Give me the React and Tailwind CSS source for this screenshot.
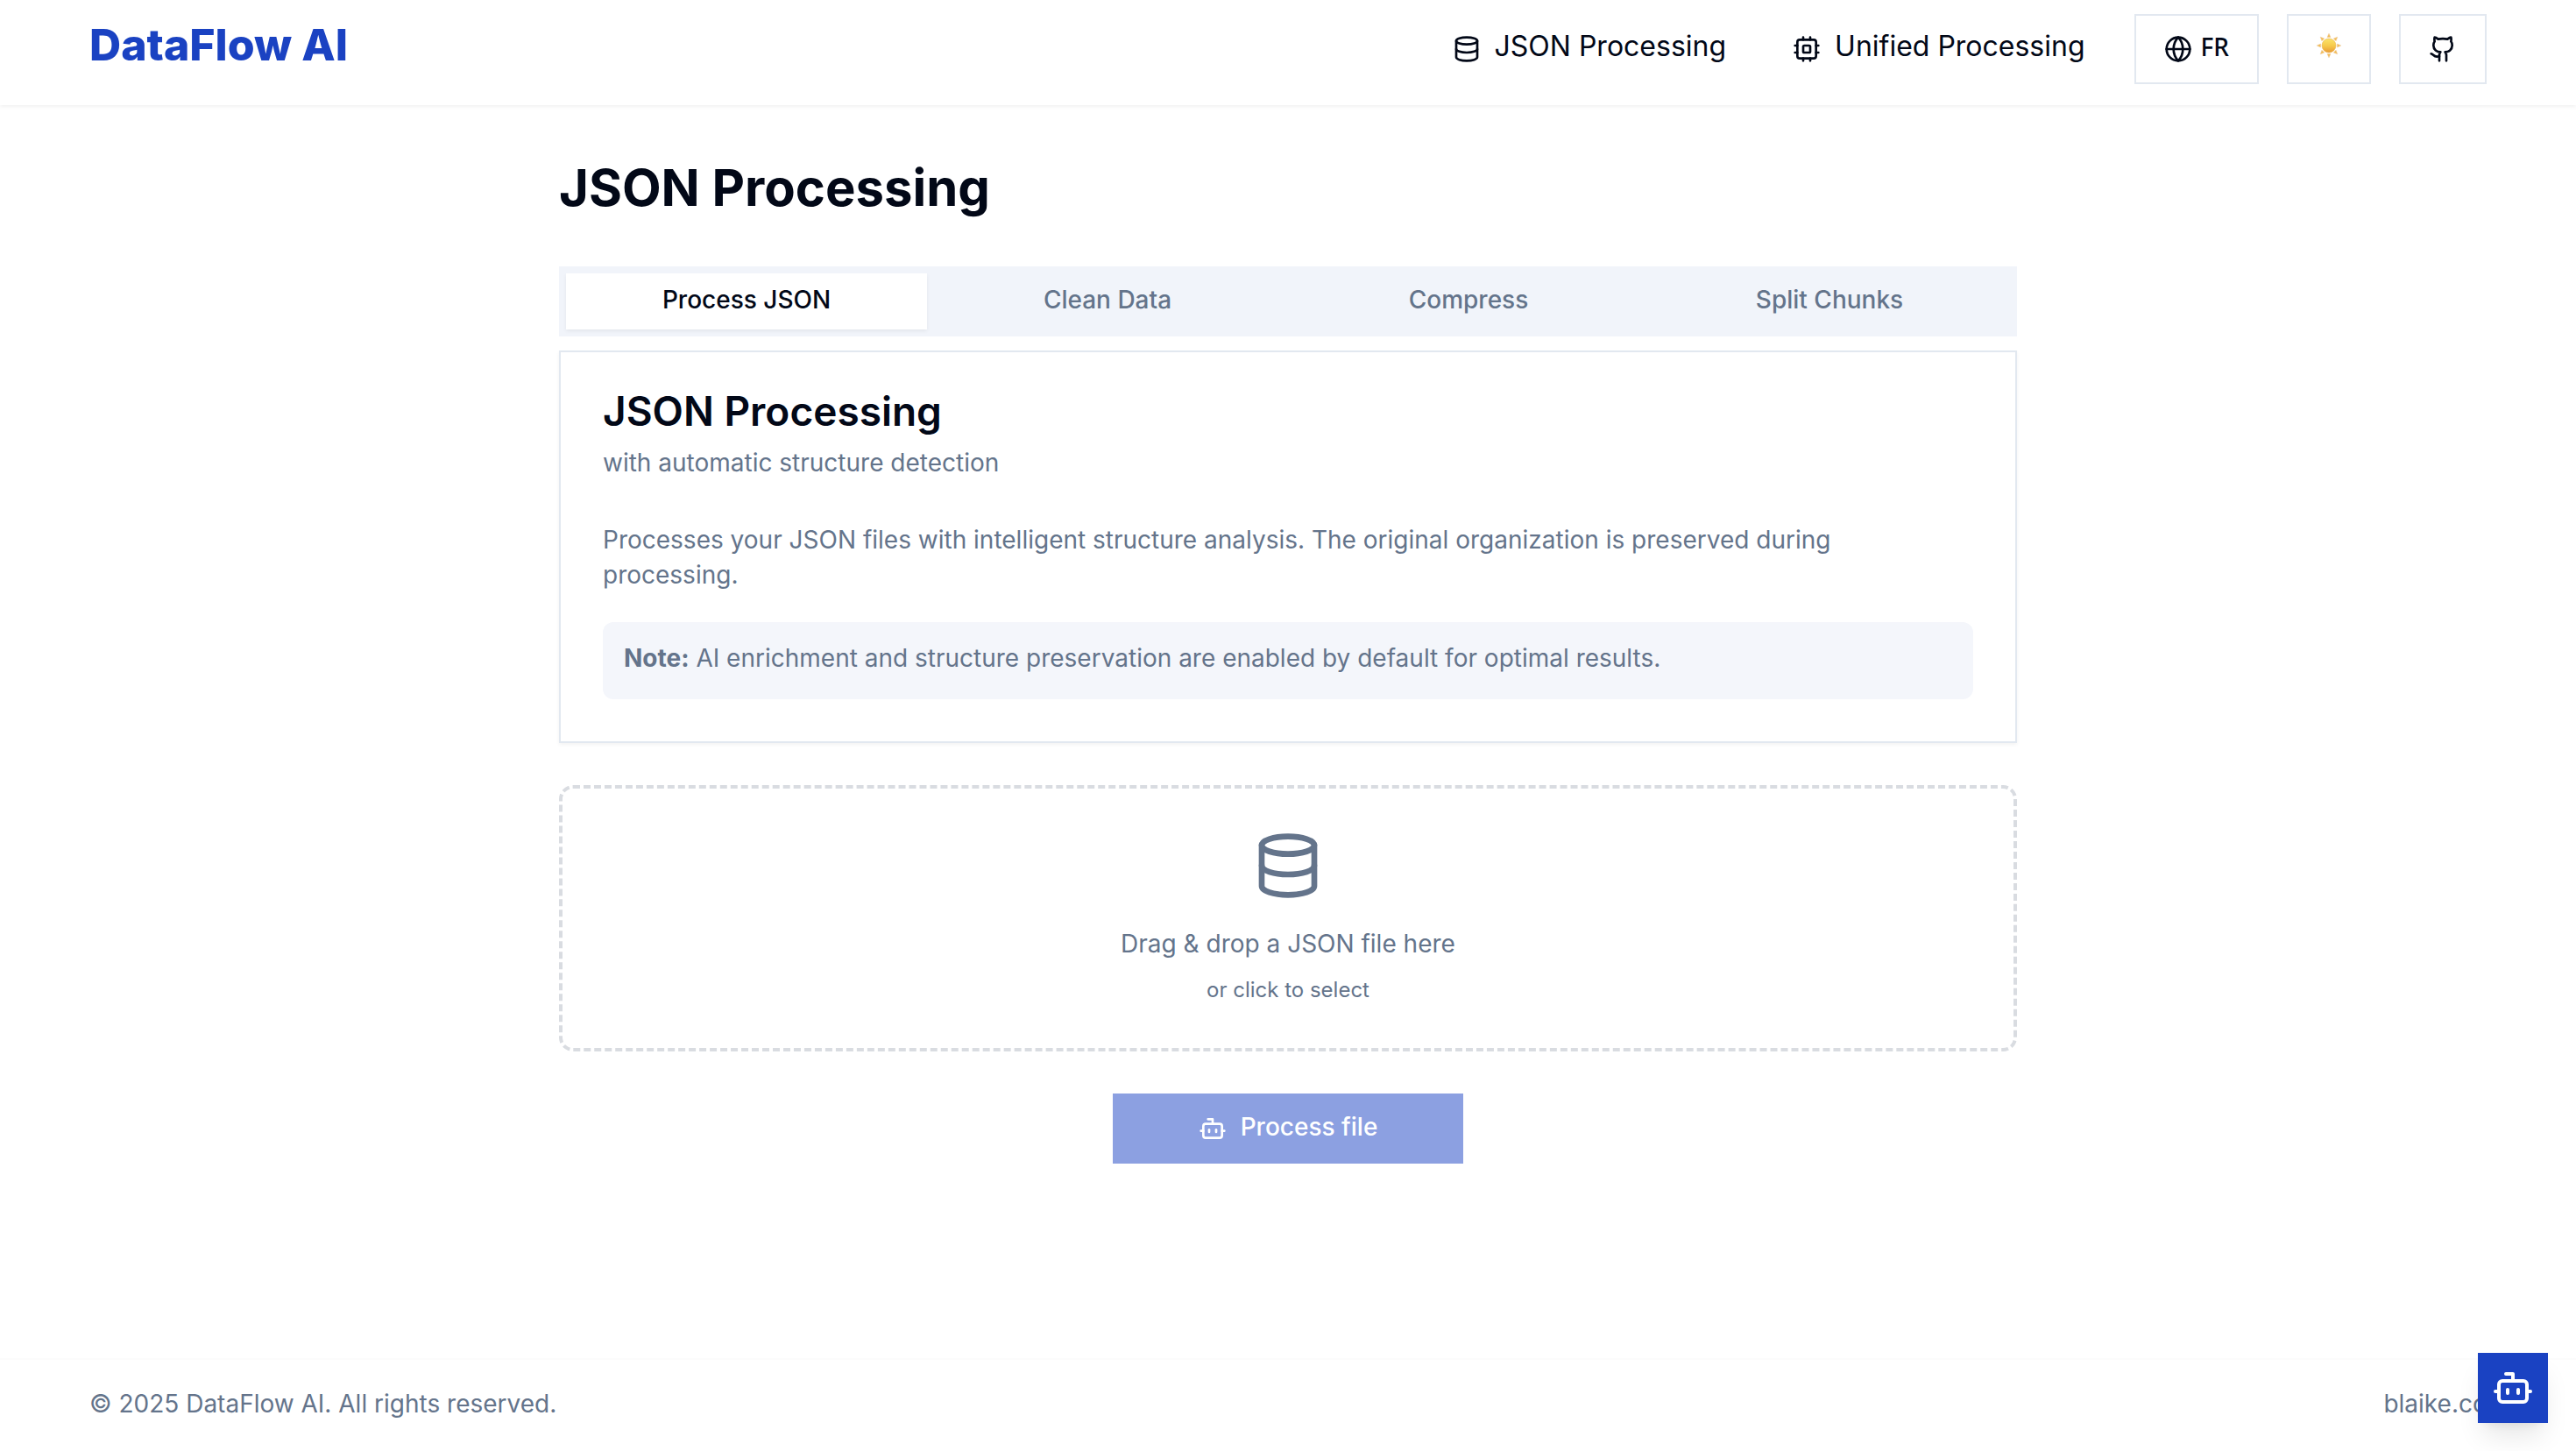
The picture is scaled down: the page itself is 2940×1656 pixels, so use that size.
import React from "react";
import { Bot, Database, Github, Globe } from "lucide-react";

function Chip({ className }) {
  return (
    <svg
      viewBox="0 0 24 24"
      fill="none"
      stroke="currentColor"
      strokeWidth="2"
      strokeLinecap="round"
      strokeLinejoin="round"
      className={className}
      aria-hidden="true"
    >
      <rect x="4" y="4" width="16" height="16" rx="2" />
      <rect x="9" y="9" width="6" height="6" rx="1" />
      <path d="M15 2v2M15 20v2M2 15h2M2 9h2M20 15h2M20 9h2M9 2v2M9 20v2" />
    </svg>
  );
}

const RAYS = [0, 45, 90, 135, 180, 225, 270, 315];

function Sun({ className }) {
  return (
    <svg viewBox="0 0 28 28" className={className} aria-hidden="true">
      <defs>
        <linearGradient id="sun-disc" x1="0" y1="0" x2="0" y2="1">
          <stop offset="0" stopColor="#fbe36a" />
          <stop offset="0.5" stopColor="#f6cb4c" />
          <stop offset="1" stopColor="#e99a35" />
        </linearGradient>
      </defs>
      {RAYS.map((a) => (
        <path
          key={a}
          d="M14 0.2L16 4.6H12Z"
          transform={`rotate(${a} 14 14)`}
          fill="#f2bd55"
          stroke="#edc9a0"
          strokeWidth="0.5"
        />
      ))}
      <circle cx="14" cy="14" r="8" fill="url(#sun-disc)" stroke="#eab04a" strokeWidth="0.5" />
    </svg>
  );
}

const NAV = [
  { label: "JSON Processing", Icon: Database },
  { label: "Unified Processing", Icon: Chip },
];

const TABS = ["Process JSON", "Clean Data", "Compress", "Split Chunks"];

function Header() {
  return (
    <header className="bg-white shadow-[0_2px_4px_rgba(0,0,0,0.06)]">
      <div className="mx-auto flex w-full max-w-[2800px] items-center justify-between px-8 pt-4 pb-6">
        <a href="#" className="pb-2.5 text-[50px] leading-[60px] font-extrabold text-[#1a42c2]">
          DataFlow AI
        </a>
        <div className="flex items-center gap-14">
          <nav className="flex items-center gap-19">
            {NAV.map(({ label, Icon }) => (
              <a key={label} href="#" className="flex items-center gap-4">
                <Icon className="size-8" />
                <span className="pb-1.5 text-[32px] leading-10">{label}</span>
              </a>
            ))}
          </nav>
          <div className="flex items-center gap-8">
            <button className="flex h-20 items-center gap-2.5 border-2 border-[#e2e8f0] px-8">
              <Globe className="size-8" />
              <span className="pb-1.5 font-['Noto_Sans',sans-serif] text-[28px] leading-10 font-medium">FR</span>
            </button>
            <button aria-label="Toggle theme" className="flex h-20 items-center border-2 border-[#e2e8f0] px-8 pb-2">
              <Sun className="size-7" />
            </button>
            <a
              href="#"
              aria-label="GitHub"
              className="flex h-20 items-center border-2 border-[#e2e8f0] px-8"
            >
              <Github className="size-8" />
            </a>
          </div>
        </div>
      </div>
    </header>
  );
}

export default function App() {
  return (
    <div className="flex min-h-screen flex-col bg-white font-[Inter,sans-serif] text-[28px] leading-10 text-[#020817]">
      <Header />
      <main className="mx-auto w-full max-w-[1792px] flex-1 px-16 pt-16">
        <h1 className="mb-15 text-[58px] leading-[60px] font-bold">JSON Processing</h1>

        <div role="tablist" className="grid h-20 grid-cols-4 bg-[#f1f4fa] p-2 font-medium text-[#64748b]">
          {TABS.map((tab, i) => (
            <button
              key={tab}
              role="tab"
              aria-selected={i === 0}
              className="pb-1 aria-selected:bg-white aria-selected:text-[#020817] aria-selected:shadow-[0_2px_4px_rgba(0,0,0,0.06)]"
            >
              {tab}
            </button>
          ))}
        </div>

        <section className="mt-4 border-2 border-[#e2e8f0] bg-white p-12 text-[#64748b] shadow-[0_2px_4px_rgba(0,0,0,0.05)]">
          <h2 className="text-[46px] leading-[38px] font-semibold text-[#020817]">JSON Processing</h2>
          <p className="mt-5">with automatic structure detection</p>
          <p className="mt-12 pr-8">
            Processes your JSON files with intelligent structure analysis. The original organization is preserved
            during processing.
          </p>
          <p className="mt-[34px] rounded-xl bg-[#f4f6fb] px-6 pt-[21px] pb-[27px]">
            <strong className="font-bold">Note:</strong> AI enrichment and structure preservation are enabled by
            default for optimal results.
          </p>
        </section>

        <label className="mt-12 flex cursor-pointer flex-col items-center rounded-2xl border-4 border-dashed border-[#d9dce1] pt-12 pb-[50px] text-[#64748b]">
          <Database className="size-20" />
          <span className="mt-[29px]">Drag &amp; drop a JSON file here</span>
          <span className="mt-[17px] text-2xl leading-8">or click to select</span>
          <input type="file" accept="application/json" className="sr-only" />
        </label>

        <button
          disabled
          className="mx-auto mt-12 flex h-20 w-[400px] items-center justify-center gap-4 bg-[#8ca0e1] font-medium text-white"
        >
          <Bot className="size-8" />
          <span className="pb-1">Process file</span>
        </button>
      </main>

      <footer className="border-t-2 border-[#fcfcfc] text-[#64748b]">
        <div className="mx-auto flex w-full max-w-[2800px] items-center justify-between px-8 pt-[30px] pb-[34px]">
          <p>© 2025 DataFlow AI. All rights reserved.</p>
          <a href="#">blaike.cc</a>
        </div>
      </footer>

      <button
        aria-label="Open assistant"
        className="fixed right-8 bottom-8 flex size-20 items-center justify-center bg-[#1a42c2] text-white shadow-[0_20px_30px_-6px_rgba(0,0,0,0.1),0_8px_12px_-8px_rgba(0,0,0,0.1)]"
      >
        <Bot className="size-12" />
      </button>
    </div>
  );
}
